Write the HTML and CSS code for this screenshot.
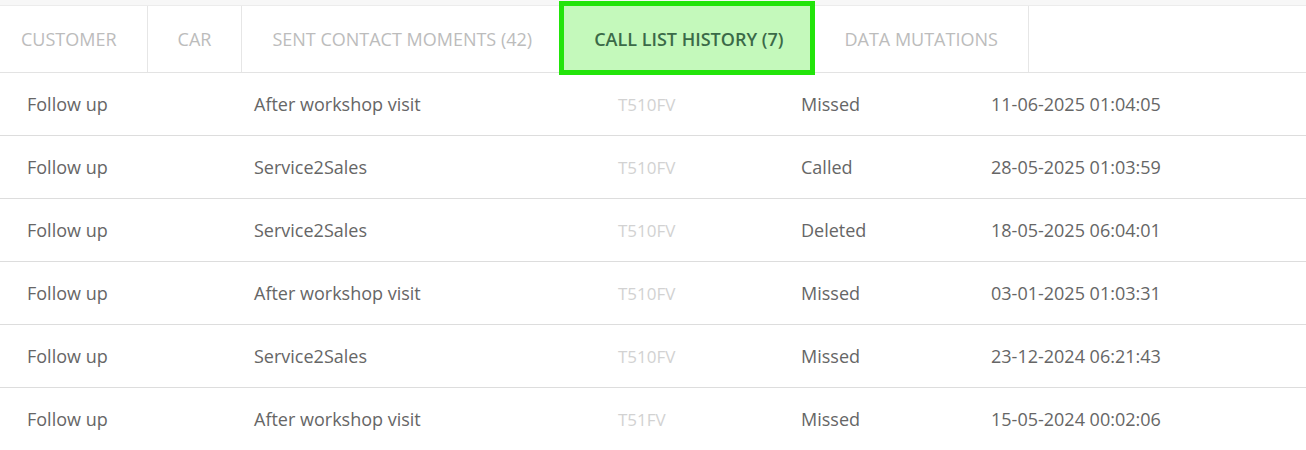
FILE: index.html
```html
<!DOCTYPE html>
<html><head>
    <title>Call list history</title>
    <meta charset="UTF-8">
    <meta name="viewport" content="width=device-width, initial-scale=1">
    <link rel="stylesheet" href="styles.css">
    </head>

    <body>
        <div class="topband"></div>
        <div class="tabs">
            <div class="tab first">Customer</div>
            <div class="tab">Car</div>
            <div class="tab">Sent contact moments (42)</div>
            <div class="tab active">Call list history (7)</div>
            <div class="tab">Data mutations</div>
        </div>

        <div class="list">
            <div class="row">
                <div>Follow up</div>
                <div>After workshop visit</div>
                <div class="plate">T510FV</div>
                <div>Missed</div>
                <div>11-06-2025 01:04:05</div>
            </div>
            <div class="row">
                <div>Follow up</div>
                <div>Service2Sales</div>
                <div class="plate">T510FV</div>
                <div>Called</div>
                <div>28-05-2025 01:03:59</div>
            </div>
            <div class="row">
                <div>Follow up</div>
                <div>Service2Sales</div>
                <div class="plate">T510FV</div>
                <div>Deleted</div>
                <div>18-05-2025 06:04:01</div>
            </div>
            <div class="row">
                <div>Follow up</div>
                <div>After workshop visit</div>
                <div class="plate">T510FV</div>
                <div>Missed</div>
                <div>03-01-2025 01:03:31</div>
            </div>
            <div class="row">
                <div>Follow up</div>
                <div>Service2Sales</div>
                <div class="plate">T510FV</div>
                <div>Missed</div>
                <div>23-12-2024 06:21:43</div>
            </div>
            <div class="row">
                <div>Follow up</div>
                <div>After workshop visit</div>
                <div class="plate">T51FV</div>
                <div>Missed</div>
                <div>15-05-2024 00:02:06</div>
            </div>
        </div>
    </body>
</html>
```

FILE: styles.css
```css
html, body {
    margin: 0;
    padding: 0;
    background: #ffffff;
    font-family: "Open Sans", Arial, sans-serif;
}

.topband {
    height: 5px;
    background: #f7f7f7;
    border-bottom: 1px solid #ececec;
}

.tabs {
    display: flex;
    height: 66px;
    border-bottom: 1px solid #e3e3e3;
}

.tab {
    display: flex;
    align-items: center;
    padding: 0 30px;
    border-right: 1px solid #e6e6e6;
    color: #bcbcbc;
    font-size: 18px;
    text-transform: uppercase;
}

.tab.first {
    padding-left: 21px;
    padding-right: 30px;
}

.tab.active {
    position: relative;
    padding: 0 31px;
    background: #c4f9bb;
    color: #3b6a48;
    font-weight: 600;
    border-right: none;
}

.tab.active::after {
    content: "";
    position: absolute;
    top: -5px;
    bottom: -3px;
    left: -4px;
    right: -1px;
    border: 5px solid #22e40a;
}

.row {
    display: grid;
    grid-template-columns: 227px 364px 183px 190px 1fr;
    align-items: center;
    height: 62px;
    padding-left: 27px;
    border-bottom: 1px solid #dddddd;
    color: #666666;
    font-size: 18px;
}

.row:last-child {
    border-bottom: none;
}

.plate {
    color: #d2d2d2;
    font-size: 17px;
}
```
